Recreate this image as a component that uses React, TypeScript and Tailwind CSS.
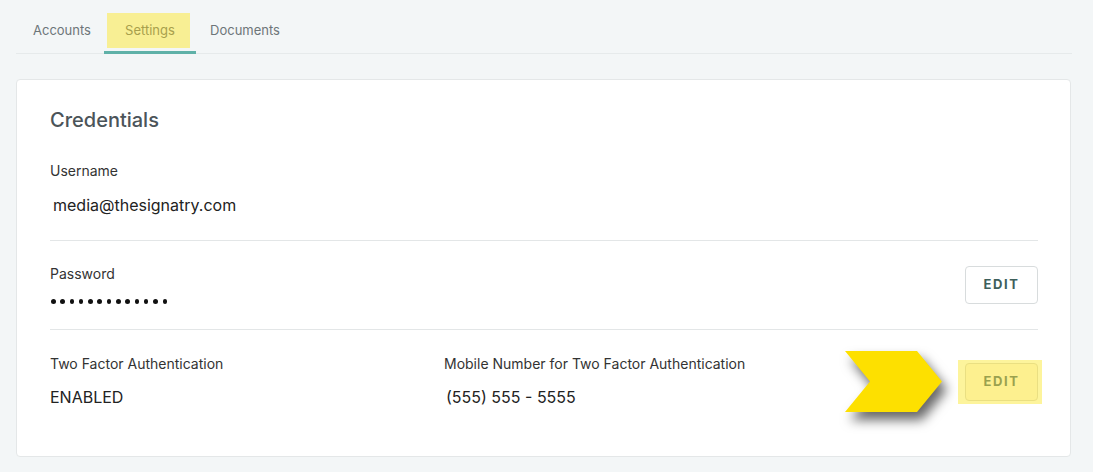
const font = { fontFamily: 'Inter, "Noto Sans", sans-serif' };

const tabs = [
  { label: 'Accounts', width: 'w-[88px] pl-[4px]' },
  { label: 'Settings', width: 'w-[92px]', active: true },
  { label: 'Documents', width: 'w-[98px]' },
];

const Tabs = () => (
  <div className="flex ml-4 w-[1056px] h-[54px] border-b border-[#e6eaeb]">
    {tabs.map((tab) => (
      <div
        key={tab.label}
        className={`relative flex items-start justify-center pt-[21px] text-[13px] ${tab.width} ${
          tab.active ? 'text-[#a8a04c]' : 'text-[#6d7579]'
        }`}
      >
        {tab.active && (
          <>
            <span className="absolute left-[3px] right-[6px] top-[13px] h-[35px] bg-[#f8ef94]" />
            <span className="absolute left-0 right-0 bottom-[-1px] h-[3px] bg-[#5fb1a8]" />
          </>
        )}
        <span className="relative leading-[18px]">{tab.label}</span>
      </div>
    ))}
  </div>
);

const EditButton = ({ highlight }: { highlight?: boolean }) => (
  <div className="relative">
    {highlight && <span className="absolute -left-[7px] -right-[4px] -top-[3px] -bottom-[3px] bg-[#fdf49c]" />}
    <button
      className={`relative w-[73px] h-[38px] rounded-[4px] border text-[13px] font-bold tracking-[0.12em] ${
        highlight
          ? 'bg-[#fdf08f] border-[#eadf82] text-[#9aa14e]'
          : 'bg-white border-[#d8dcdd] text-[#3e5f5b]'
      }`}
    >
      EDIT
    </button>
  </div>
);

const Arrow = () => (
  <svg
    className="absolute left-[845px] top-[351px]"
    width="112"
    height="82"
    viewBox="0 0 112 82"
    style={{ filter: 'drop-shadow(5px 8px 6px rgba(0,0,0,0.6))' }}
  >
    <polygon points="0,0 72,0 97,30.5 72,61 0,61 25,30.5" fill="#fde000" />
  </svg>
);

export default function App() {
  return (
    <div className="relative w-[1093px] h-[472px] bg-[#f3f6f7] overflow-hidden" style={font}>
      <Tabs />

      <div className="mt-[25px] mx-4 w-[1055px] h-[378px] bg-white border border-[#e4e7e8] rounded-[4px] pl-[33px] pr-[32px] pt-[26px]">
        <h2 className="text-[20px] leading-[28px] font-medium text-[#4b5459]">Credentials</h2>

        <div className="mt-[27px] text-[14px] leading-[20px] text-[#333]">Username</div>
        <div className="mt-[12px] ml-[3px] text-[16px] leading-[24px] text-[#222]">media@thesignatry.com</div>

        <div className="mt-[23px] h-px bg-[#e3e6e7]" />

        <div className="flex items-center justify-between h-[88px]">
          <div className="-mt-[2px]">
            <div className="text-[14px] leading-[20px] text-[#333]">Password</div>
            <div className="flex gap-[4.8px] mt-[15px] ml-[1px]">
              {Array.from({ length: 13 }).map((_, i) => (
                <span key={i} className="w-[4.5px] h-[4.5px] rounded-full bg-[#111]" />
              ))}
            </div>
          </div>
          <EditButton />
        </div>

        <div className="h-px bg-[#e3e6e7]" />

        <div className="flex items-start pt-[24px]">
          <div className="w-[394px]">
            <div className="text-[14px] leading-[20px] text-[#333]">Two Factor Authentication</div>
            <div className="mt-[11px] text-[16px] leading-[24px] text-[#222]">ENABLED</div>
          </div>
          <div className="flex-1">
            <div className="text-[14px] leading-[20px] text-[#333]">Mobile Number for Two Factor Authentication</div>
            <div className="mt-[11px] ml-[2px] text-[16px] leading-[24px] text-[#222]">(555) 555 - 5555</div>
          </div>
          <div className="pt-[9px]">
            <EditButton highlight />
          </div>
        </div>
      </div>

      <Arrow />
    </div>
  );
}
